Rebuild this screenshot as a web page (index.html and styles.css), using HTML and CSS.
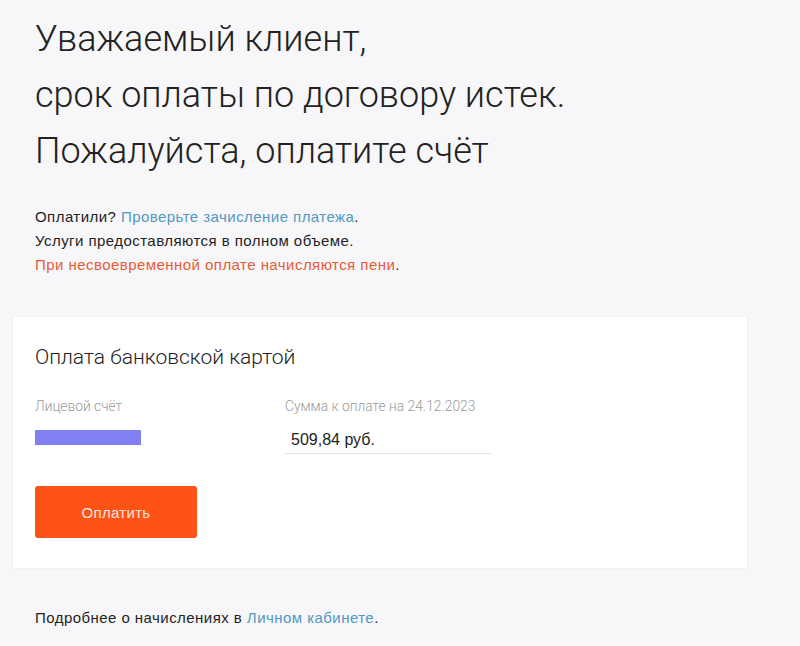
FILE: index.html
```html
<!DOCTYPE html>
<html lang="ru">
<head>
<meta charset="utf-8">
<link rel="stylesheet" href="styles.css">
</head>
<body>
<main class="page">
  <h1 class="title">Уважаемый клиент,<br>срок оплаты по договору истек.<br>Пожалуйста, оплатите счёт</h1>
  <div class="notes">
    <p>Оплатили? <a class="link" href="#">Проверьте зачисление платежа</a>.</p>
    <p>Услуги предоставляются в полном объеме.</p>
    <p><span class="warn">При несвоевременной оплате начисляются пени</span>.</p>
  </div>
  <section class="card">
    <h2 class="card-title">Оплата банковской картой</h2>
    <div class="fields">
      <div class="field field-account">
        <div class="label">Лицевой счёт</div>
        <div class="masked"></div>
      </div>
      <div class="field field-sum">
        <div class="label">Сумма к оплате на 24.12.2023</div>
        <div class="value">509,84 руб.</div>
      </div>
    </div>
    <button class="pay">Оплатить</button>
  </section>
  <p class="footer">Подробнее о начислениях в <a class="link" href="#">Личном кабинете</a>.</p>
</main>
</body>
</html>
```
FILE: styles.css
```css
html, body {
  margin: 0;
  padding: 0;
  background: #f7f7f9;
}
body {
  font-family: "Liberation Sans", Arial, sans-serif;
  color: #1f1f1f;
}
.page {
  width: 734px;
  margin-left: 13px;
  padding-top: 11px;
}
.title {
  margin: 0;
  padding: 0 22px;
  font-family: Roboto, "Liberation Sans", sans-serif;
  font-weight: 300;
  font-size: 36px;
  line-height: 56px;
  color: #222;
}
.notes {
  padding: 0 22px;
  margin-top: 26px;
  font-size: 15px;
  letter-spacing: 0.45px;
  line-height: 24px;
}
.notes p { margin: 0; }
.link {
  color: #5298c0;
  text-decoration: none;
}
.warn { color: #e85a35; }
.card {
  margin-top: 40px;
  background: #fff;
  box-shadow: 0 0 3px rgba(0,0,0,0.06);
  padding: 26px 22px 30px;
}
.card-title {
  margin: 0;
  font-family: Roboto, "Liberation Sans", sans-serif;
  font-weight: 300;
  font-size: 21px;
  line-height: 28px;
  color: #222;
}
.fields {
  display: flex;
  margin-top: 26px;
}
.field-account { width: 250px; }
.field-sum { width: 206px; }
.label {
  font-family: Roboto, "Liberation Sans", sans-serif;
  font-weight: 300;
  font-size: 13.8px;
  line-height: 18px;
  color: #9a9a9a;
}
.masked {
  margin-top: 15px;
  width: 106px;
  height: 15px;
  background: #8080f4;
}
.value {
  margin-top: 11px;
  padding: 0 6px;
  font-size: 16px;
  line-height: 27px;
  color: #222;
  border-bottom: 1px solid #e2e2e2;
}
.pay {
  display: block;
  margin-top: 32px;
  width: 162px;
  height: 52px;
  border: none;
  border-radius: 3px;
  background: #ff5216;
  color: #fde9df;
  font-family: "Liberation Sans", Arial, sans-serif;
  font-size: 15px;
  letter-spacing: 0.3px;
  cursor: pointer;
}
.footer {
  margin: 40px 0 0;
  padding: 0 22px;
  font-size: 15px;
  letter-spacing: 0.45px;
  line-height: 20px;
}
```
